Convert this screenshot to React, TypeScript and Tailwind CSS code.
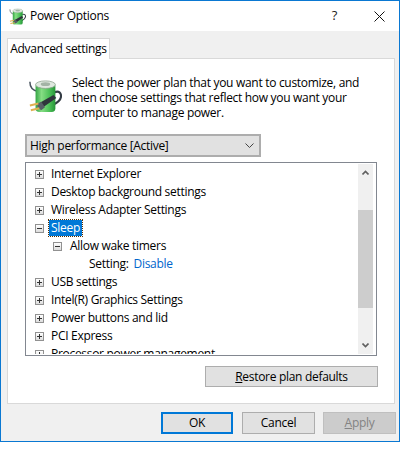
import React from 'react';

const font = 'font-["Open_Sans","Noto_Sans",sans-serif] tracking-[-0.3px]';

function PowerIcon({ size }: { size: number }) {
  return (
    <svg width={size} height={size} viewBox="0 0 36 36" className="shrink-0">
      <defs>
        <linearGradient id="cell" x1="0" x2="1" y1="0" y2="0">
          <stop offset="0" stopColor="#34a544" />
          <stop offset="0.3" stopColor="#86dd84" />
          <stop offset="0.7" stopColor="#4cc058" />
          <stop offset="1" stopColor="#279538" />
        </linearGradient>
      </defs>
      <path d="M2 3c0 6 3 9 8 10" fill="none" stroke="#4a5560" strokeWidth="1.6" />
      <path d="M28 14c5-2 7 1 7 4 0 4-4 7-8 9" fill="none" stroke="#333b44" strokeWidth="2.2" />
      <rect x="8" y="4" width="21" height="31" rx="4" fill="url(#cell)" />
      <ellipse cx="18.5" cy="6" rx="10.5" ry="4" fill="#dfe8df" stroke="#8aa08c" strokeWidth="0.8" />
      <ellipse cx="18.5" cy="5.5" rx="5" ry="2" fill="#a3b3a5" />
      <path d="M13 25l14-8 3 3-14 10z" fill="#2f343b" />
      <path d="M14 24l-4 2v4l4 3 4-3z" fill="#565d66" />
      <path d="M11 26L2 28M12 31l-9 2" stroke="#e0b050" strokeWidth="2.2" />
    </svg>
  );
}

function Expander({ open }: { open?: boolean }) {
  return (
    <span className="relative block w-[9px] h-[9px] border border-[#919191] bg-gradient-to-b from-[#ffffff] to-[#dcdcdc] shrink-0">
      <span className="absolute left-[1px] top-[3px] w-[5px] h-[1px] bg-[#333333]" />
      {!open && <span className="absolute left-[3px] top-[1px] w-[1px] h-[5px] bg-[#333333]" />}
    </span>
  );
}

function Row({ label, open }: { label: string; open?: boolean }) {
  return (
    <div className="h-[18px] flex items-center pl-[8px] shrink-0">
      <Expander open={open} />
      <span className="ml-[7px] text-[12px] leading-[18px] whitespace-nowrap text-black">{label}</span>
    </div>
  );
}

function Btn({ children, primary, disabled, className = '' }: { children: React.ReactNode; primary?: boolean; disabled?: boolean; className?: string }) {
  return (
    <div
      className={`flex items-center justify-center text-[12px] ${
        primary
          ? 'bg-[#e1e1e1] border-2 border-[#0078d7]'
          : disabled
            ? 'border border-[#bfbfbf] bg-[#cccccc] text-[#838383]'
            : 'bg-[#e1e1e1] border border-[#adadad]'
      } ${className}`}
    >
      {children}
    </div>
  );
}

export default function App() {
  return (
    <div className={`w-[405px] h-[455px] bg-white text-black ${font}`}>
      <div className="w-[400px] h-[442px] border border-[#0a78d2] flex flex-col bg-[#f0f0f0]">
        <div className="h-[30px] bg-white flex items-center shrink-0">
          <span className="ml-[8px]"><PowerIcon size={17} /></span>
          <span className="ml-[4px] text-[12px]">Power Options</span>
          <span className="ml-auto mr-[37px] text-[13px] text-[#222222]">?</span>
          <svg width="11" height="11" viewBox="0 0 11 11" className="mr-[14px]">
            <path d="M.5.5l10 10M10.5.5l-10 10" stroke="#111111" fill="none" />
          </svg>
        </div>

        <div className="flex-1 flex flex-col pl-[6px] pr-[3px] pt-[7px]">
          <div className="h-[21px] w-[103px] bg-white border border-b-0 border-[#d9d9d9] flex items-center justify-center text-[12px] whitespace-nowrap -mb-[1px] relative z-10">
            Advanced settings
          </div>
          <div className="h-[346px] w-[388px] border border-[#d9d9d9] bg-white flex flex-col pl-[17px] pr-[16px]">
            <div className="flex h-[75px] shrink-0 pt-[16px]">
              <span className="ml-[3px] mt-[4px] w-[44px] shrink-0"><PowerIcon size={34} /></span>
              <p className="text-[12px] leading-[15px] w-[300px]">
                Select the power plan that you want to customize, and then choose settings that reflect how you want your computer to manage power.
              </p>
            </div>
            <div className="h-[23px] w-[236px] border-2 border-[#adadad] bg-[#e1e1e1] flex items-center pl-[3px] pr-[5px] text-[12px] shrink-0">
              High performance [Active]
              <svg width="9" height="6" viewBox="0 0 9 6" className="ml-auto">
                <path d="M.5.5l4 4 4-4" fill="none" stroke="#444444" />
              </svg>
            </div>
            <div className="mt-[5px] h-[194px] w-[352px] border border-[#828790] flex shrink-0 overflow-hidden p-[1px]">
              <div className="flex-1 flex flex-col pt-[1px] overflow-hidden">
                <Row label="Internet Explorer" />
                <Row label="Desktop background settings" />
                <Row label="Wireless Adapter Settings" />
                <div className="h-[18px] flex items-center pl-[8px] shrink-0">
                  <Expander open />
                  <span className="ml-[5px] px-[2px] text-[12px] leading-[16px] bg-[#0078d7] text-white outline-1 outline-dotted outline-[#5a3000]">Sleep</span>
                </div>
                <div className="h-[18px] flex items-center pl-[26px] shrink-0">
                  <Expander open />
                  <span className="ml-[8px] text-[12px] whitespace-nowrap">Allow wake timers</span>
                </div>
                <div className="h-[18px] flex items-center pl-[62px] text-[12px] shrink-0">
                  <span>Setting:</span>
                  <span className="ml-[5px] text-[#0066cc]">Disable</span>
                </div>
                <Row label="USB settings" />
                <Row label="Intel(R) Graphics Settings" />
                <Row label="Power buttons and lid" />
                <Row label="PCI Express" />
                <Row label="Processor power management" />
              </div>
              <div className="w-[15px] mr-[2px] bg-[#f0f0f0] flex flex-col shrink-0">
                <div className="h-[17px] flex items-center justify-center">
                  <svg width="7" height="5" viewBox="0 0 7 5"><path d="M.5 4.5l3-3 3 3" fill="none" stroke="#606060" strokeWidth="1.6" /></svg>
                </div>
                <div className="mt-[29px] h-[98px] bg-[#cdcdcd]" />
                <div className="mt-auto h-[17px] flex items-center justify-center">
                  <svg width="7" height="5" viewBox="0 0 7 5"><path d="M.5.5l3 3 3-3" fill="none" stroke="#606060" strokeWidth="1.6" /></svg>
                </div>
              </div>
            </div>
            <Btn className="mt-[10px] ml-[180px] w-[173px] h-[21px] shrink-0">
              <span><span className="underline">R</span>estore plan defaults</span>
            </Btn>
          </div>
          <div className="flex justify-end gap-[8px] mt-[8px]">
            <Btn primary className="w-[72px] h-[22px] mr-[1px]">OK</Btn>
            <Btn className="w-[73px] h-[22px]">Cancel</Btn>
            <Btn disabled className="w-[73px] h-[22px]"><span><span className="underline">A</span>pply</span></Btn>
          </div>
        </div>
      </div>
    </div>
  );
}
